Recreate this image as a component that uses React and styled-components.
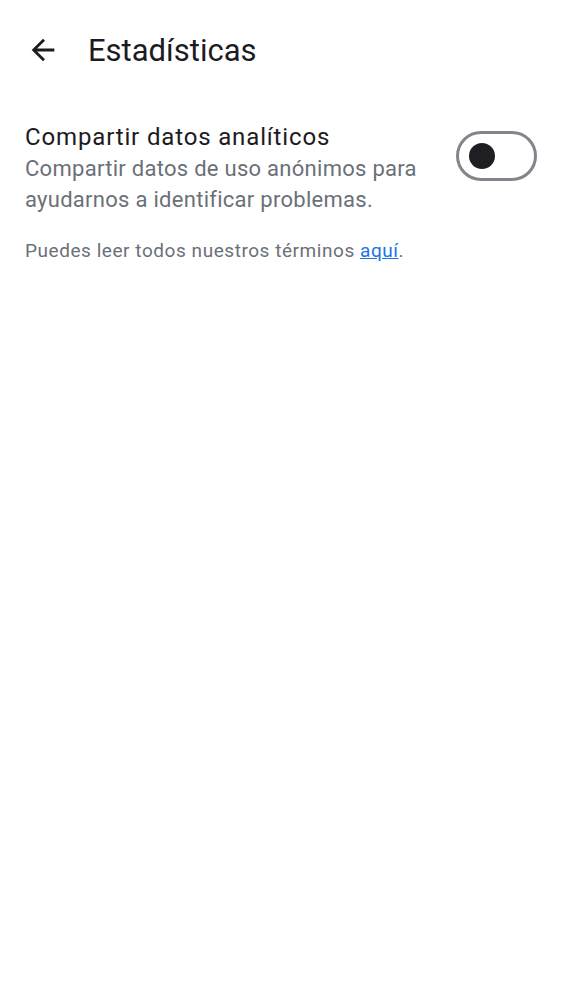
import React, { useState } from 'react';
import styled, { createGlobalStyle } from 'styled-components';

const GlobalStyle = createGlobalStyle`
    body {
        margin: 0;
        background: #fff;
        font-family: Roboto, 'Noto Sans', sans-serif;
    }
`;

const Page = styled.div`
    width: 562px;
    min-height: 1000px;
    background: #fff;
`;

const TopBar = styled.header`
    display: flex;
    align-items: center;
    height: 100px;
    padding: 0 0 0 26px;
    box-sizing: border-box;
`;

const BackButton = styled.button`
    width: 34px;
    height: 34px;
    padding: 0;
    border: none;
    background: none;
    display: flex;
    align-items: center;
    justify-content: center;
    margin-right: 28px;
    color: #1c1b1f;
`;

const Title = styled.h1`
    margin: 0;
    font-size: 31px;
    font-weight: 400;
    color: #1c1b1f;
`;

const Content = styled.section`
    padding: 17px 25px 0 25px;
`;

const SettingRow = styled.div`
    display: flex;
    align-items: flex-start;
    justify-content: space-between;
`;

const Texts = styled.div`
    display: flex;
    flex-direction: column;
`;

const Label = styled.div`
    font-size: 24px;
    line-height: 36px;
    letter-spacing: 0.85px;
    color: #1c1b1f;
    margin: 2px 0 -2px 0;
`;

const Description = styled.div`
    font-size: 22px;
    line-height: 31px;
    letter-spacing: 0.28px;
    color: #6b7078;
    max-width: 420px;
`;

const Toggle = styled.button`
    flex: none;
    width: 81px;
    height: 50px;
    margin-top: 14px;
    border: 3px solid #80868b;
    border-radius: 25px;
    background: ${(p) => (p.on ? '#1a73e8' : '#fff')};
    box-sizing: border-box;
    padding: 0 0 0 ${(p) => (p.on ? '39px' : '10px')};
    display: flex;
    align-items: center;
    .knob {
        width: 26px;
        height: 26px;
        border-radius: 50%;
        background: ${(p) => (p.on ? '#fff' : '#1f1f23')};
    }
`;

const Terms = styled.p`
    margin: 24px 0 0 0;
    font-size: 19px;
    letter-spacing: 0.55px;
    color: #6b7078;
    a {
        color: #1a73e8;
        text-decoration: underline;
    }
`;

const App = () => {
    const [on, setOn] = useState(false);
    return (
        <Page>
            <GlobalStyle />
            <TopBar>
                <BackButton aria-label="Atrás">
                    <svg width="34" height="34" viewBox="0 0 24 24">
                        <path
                            d="M20 11H7.83l5.59-5.59L12 4l-8 8 8 8 1.41-1.41L7.83 13H20v-2z"
                            fill="currentColor"
                        />
                    </svg>
                </BackButton>
                <Title>Estadísticas</Title>
            </TopBar>
            <Content>
                <SettingRow>
                    <Texts>
                        <Label>Compartir datos analíticos</Label>
                        <Description>
                            Compartir datos de uso anónimos para ayudarnos a identificar
                            problemas.
                        </Description>
                    </Texts>
                    <Toggle on={on ? 1 : 0} onClick={() => setOn(!on)}>
                        <span className="knob" />
                    </Toggle>
                </SettingRow>
                <Terms>
                    Puedes leer todos nuestros términos <a href="#terms">aquí</a>.
                </Terms>
            </Content>
        </Page>
    );
};

export default App;
